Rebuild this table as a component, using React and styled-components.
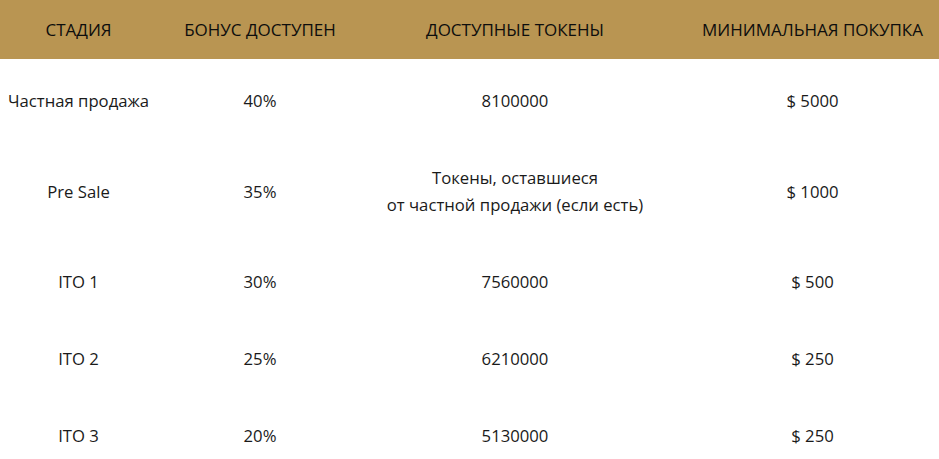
import React from "react";
import styled, { createGlobalStyle } from "styled-components";

const Global = createGlobalStyle`
  html, body { margin: 0; padding: 0; background: #fff; overflow: hidden; }
  body { font-family: "Open Sans", "Noto Sans", sans-serif; }
`;

const Wrap = styled.div`
  width: 939px;
  overflow: hidden;
`;

const Table = styled.div`
  width: 958px;
  display: grid;
  grid-template-columns: 157px 206px 304px 291px;
`;

const HeadRow = styled.div`
  display: contents;
`;

const HeadCell = styled.div`
  background: #b99552;
  height: 59px;
  display: flex;
  align-items: center;
  justify-content: center;
  font-size: 17px;
  font-weight: 400;
  color: #0d0d0d;
  white-space: nowrap;
  margin-bottom: 3px;
`;

const Cell = styled.div`
  display: flex;
  align-items: center;
  justify-content: center;
  text-align: center;
  padding: 25px 0;
  font-size: 16.7px;
  line-height: 27px;
  color: #1a1a1a;
  white-space: nowrap;
`;

const rows = [
  ["Частная продажа", "40%", "8100000", "$ 5000"],
  ["Pre Sale", "35%", ["Токены, оставшиеся", "от частной продажи (если есть)"], "$ 1000"],
  ["ITO 1", "30%", "7560000", "$ 500"],
  ["ITO 2", "25%", "6210000", "$ 250"],
  ["ITO 3", "20%", "5130000", "$ 250"],
];

export default function App() {
  return (
    <Wrap>
      <Global />
      <Table>
        <HeadRow>
          <HeadCell>СТАДИЯ</HeadCell>
          <HeadCell>БОНУС ДОСТУПЕН</HeadCell>
          <HeadCell>ДОСТУПНЫЕ ТОКЕНЫ</HeadCell>
          <HeadCell>МИНИМАЛЬНАЯ ПОКУПКА</HeadCell>
        </HeadRow>
        {rows.map((r, i) =>
          r.map((c, j) => (
            <Cell key={i + "-" + j}>
              {Array.isArray(c) ? (
                <span>
                  {c[0]}
                  <br />
                  {c[1]}
                </span>
              ) : (
                c
              )}
            </Cell>
          ))
        )}
      </Table>
    </Wrap>
  );
}
